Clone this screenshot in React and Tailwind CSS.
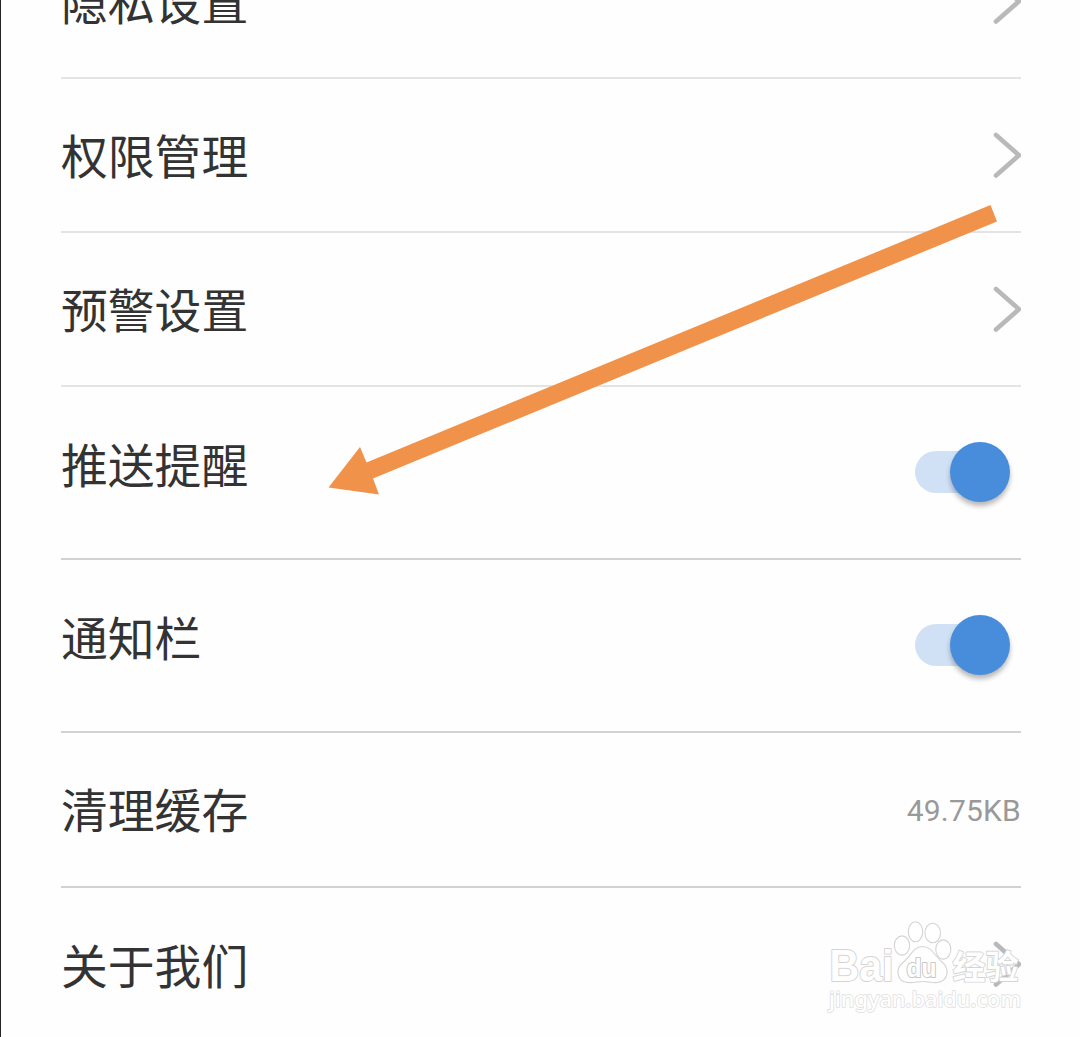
import React from "react";

const rows = [
  { label: "隐私设置", type: "link", box: "h-[154px] border-[#e4e4e4]", text: "pb-0.5" },
  { label: "权限管理", type: "link", box: "h-[154px] border-[#e4e4e4]", text: "pb-0.5" },
  { label: "预警设置", type: "link", box: "h-[154px] border-[#e4e4e4]", text: "pb-0.5" },
  { label: "推送提醒", type: "switch", box: "h-[173px] border-[#d2d2d2]", text: "pb-[19px]" },
  { label: "通知栏", type: "switch", box: "h-[173px] border-[#d2d2d2]", text: "pb-[19px]" },
  { label: "清理缓存", type: "value", value: "49.75KB", box: "h-[155px] border-[#d2d2d2]", text: "pb-0.5" },
  { label: "关于我们", type: "link", box: "h-[154px] border-transparent", text: "" },
];

function Chevron() {
  return (
    <svg width="30" height="48" viewBox="0 0 30 48" fill="none">
      <path
        d="M5 4L28 24.200L5 44.500"
        stroke="#b9b9b9"
        strokeWidth="4.6"
        strokeLinecap="round"
      />
    </svg>
  );
}

function Switch() {
  return (
    <div className="relative mr-[11px] mb-0.5 h-[60px] w-[95px]">
      <div className="absolute top-[9px] left-0 h-[42px] w-[80px] rounded-full bg-[#d0e1f6]" />
      <div className="absolute top-0 right-0 size-[60px] rounded-full bg-[#488cdc] shadow-[0_4px_5px_rgba(0,0,0,0.28)]" />
    </div>
  );
}

function Watermark() {
  return (
    <svg
      className="absolute top-[915px] left-[819px]"
      width="210"
      height="102"
      viewBox="820 915 210 102"
      fill="white"
    >
      {/* paw */}
      <g stroke="#d4d4d4" strokeWidth="1.1">
        <ellipse cx="902" cy="945.5" rx="7.6" ry="9.6" />
        <ellipse cx="915.5" cy="931.800" rx="7.2" ry="10" />
        <ellipse cx="932.7" cy="933" rx="7.8" ry="9.8" />
        <ellipse cx="943.3" cy="949.5" rx="7.5" ry="9.6" />
        <path d="M922.500 946.500C913 946.500 910.500 957 903 962.500C895 969 896.500 981.500 908 982.500C914 983 918 981.500 923 981.500C928 981.500 932 983 937.500 982.500C948.500 981 950 968.500 942 962C934.500 956 932 946.500 922.500 946.500Z" />
      </g>
      {/* white letters with a thin grey contour behind the fill */}
      <g className="[paint-order:stroke]" stroke="#d4d4d4" strokeLinejoin="round">
        <text
          x="829.5"
          y="981"
          fontFamily="Liberation Sans, sans-serif"
          fontWeight="bold"
          fontSize="45"
          textLength="64"
          lengthAdjust="spacingAndGlyphs"
          strokeWidth="2"
        >
          Bai
        </text>
        <text
          x="906.5"
          y="977"
          fontFamily="Liberation Sans, sans-serif"
          fontWeight="bold"
          fontSize="25"
          textLength="30"
          lengthAdjust="spacingAndGlyphs"
          stroke="#c8c8c8"
          strokeWidth="2"
        >
          du
        </text>
        <text
          x="952.5"
          y="979"
          fontFamily="Noto Sans CJK SC, sans-serif"
          fontWeight="bold"
          fontSize="33"
          textLength="66"
          strokeWidth="1.8"
        >
          经验
        </text>
        <text
          x="829"
          y="1007"
          fontFamily="Noto Sans, sans-serif"
          fontSize="22"
          fontWeight="500"
          textLength="192"
          lengthAdjust="spacingAndGlyphs"
          stroke="#dedede"
          strokeWidth="1.6"
        >
          jingyan.baidu.com
        </text>
      </g>
    </svg>
  );
}

export default function App() {
  return (
    <div className="relative h-[1037px] w-[1080px] overflow-hidden border-l border-[#242424] bg-[#fefefe] font-['Noto_Sans_CJK_SC',sans-serif]">
      <div className="-mt-[75px] mr-[59px] ml-[60px] flex flex-col">
        {rows.map((row) => (
          <div
            key={row.label}
            className={`flex shrink-0 items-center justify-between border-b-2 ${row.box}`}
          >
            <span className={`text-[46.8px] leading-none text-[#333] ${row.text}`}>
              {row.label}
            </span>
            {row.type === "link" && <Chevron />}
            {row.type === "switch" && <Switch />}
            {row.type === "value" && (
              <span className="pt-[3px] font-['Roboto',sans-serif] text-[30px] leading-none tracking-[0.2px] text-[#999]">
                {row.value}
              </span>
            )}
          </div>
        ))}
      </div>

      {/* arrow pointing at the push reminder row */}
      <svg
        className="absolute top-[200px] left-[319px]"
        width="690"
        height="300"
        viewBox="320 200 690 300"
      >
        <path
          d="M990.500 205L997 221.500L373 478.500L379 494.500L328.500 487.500L360 447L366.500 462.500Z"
          fill="#f0924a"
        />
      </svg>

      <Watermark />
    </div>
  );
}
